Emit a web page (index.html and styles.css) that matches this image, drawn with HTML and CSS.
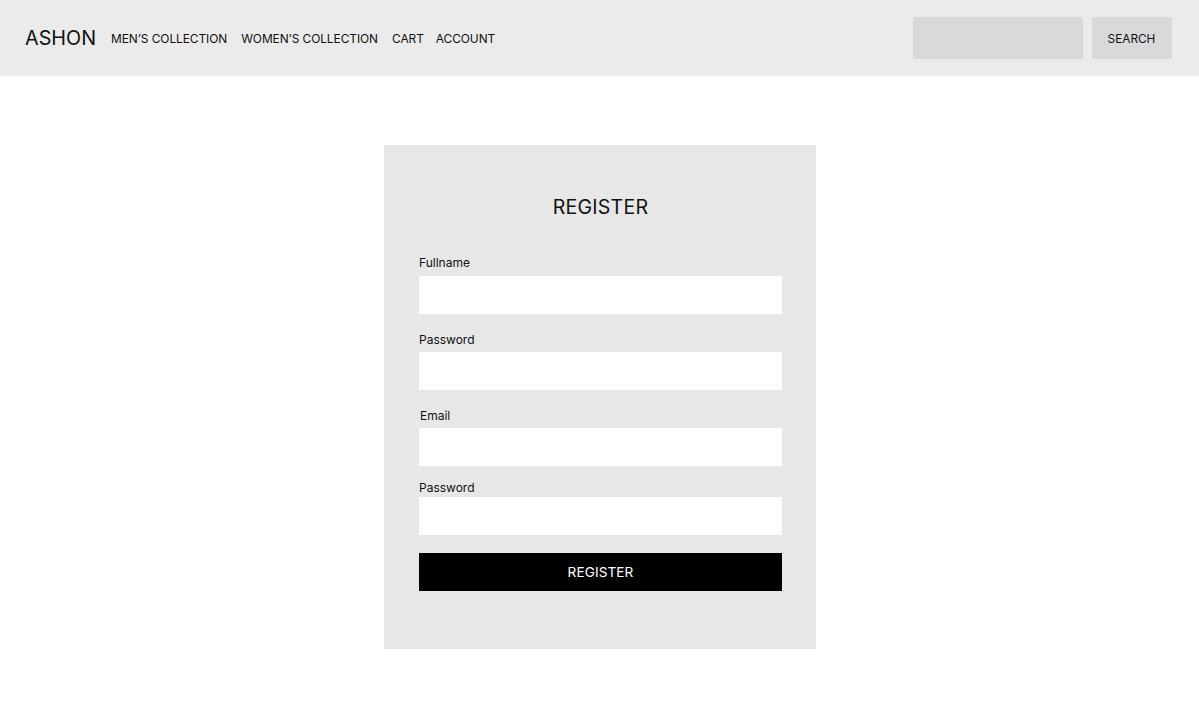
FILE: index.html
```html
<!DOCTYPE html>
<html lang="en">
<head>
<meta charset="utf-8">
<title>ASHON - Register</title>
<link rel="stylesheet" href="styles.css">
</head>
<body>
<header class="topbar">
  <div class="brand">ASHON</div>
  <nav class="nav">
    <a href="#" class="nav-link">MEN’S COLLECTION</a>
    <a href="#" class="nav-link">WOMEN’S COLLECTION</a>
    <a href="#" class="nav-link nav-link--tight">CART</a>
    <a href="#" class="nav-link">ACCOUNT</a>
  </nav>
  <form class="search">
    <input class="search-input" type="text" aria-label="Search">
    <button class="search-btn" type="button">SEARCH</button>
  </form>
</header>
<main class="main">
  <section class="card">
    <h1 class="card-title">REGISTER</h1>
    <div class="field">
      <label class="field-label">Fullname</label>
      <input class="field-input" type="text">
    </div>
    <div class="field">
      <label class="field-label">Password</label>
      <input class="field-input" type="password">
    </div>
    <div class="field">
      <label class="field-label field-label--indent">Email</label>
      <input class="field-input" type="email">
    </div>
    <div class="field field--compact">
      <label class="field-label">Password</label>
      <input class="field-input" type="password">
    </div>
    <button class="submit" type="button">REGISTER</button>
  </section>
</main>
</body>
</html>
```
FILE: styles.css
```css
* { box-sizing: border-box; }
html, body { margin: 0; padding: 0; }
body {
  font-family: Inter, "Liberation Sans", sans-serif;
  color: #111;
  background: #fff;
}
.topbar {
  height: 76px;
  background: #ebebeb;
  display: flex;
  align-items: center;
  padding: 0 27px 0 25px;
}
.brand {
  font-size: 19.8px;
  font-weight: 400;
  margin-right: 15px;
  line-height: 24px;
}
.nav {
  display: flex;
  align-items: center;
  gap: 14px;
  flex: 1;
  padding-top: 1px;
}
.nav-link {
  font-size: 11.9px;
  letter-spacing: -0.05px;
  color: #111;
  text-decoration: none;
  line-height: 15px;
}
.nav-link--tight { margin-right: -2px; }
.search {
  display: flex;
  gap: 9px;
  margin: 0;
}
.search-input {
  width: 170px;
  height: 42px;
  border: 0;
  background: #d9d9d9;
  outline: none;
  padding: 0 8px;
}
.search-btn {
  width: 80px;
  height: 42px;
  border: 0;
  background: #d9d9d9;
  font-family: inherit;
  font-size: 11.8px;
  color: #111;
  padding: 2px 1px 0 0;
}
.main {
  display: flex;
  justify-content: center;
  padding-top: 69px;
  padding-left: 1px;
}
.card {
  width: 432px;
  height: 504px;
  background: #e7e7e7;
  padding: 50px 34px 0 35px;
}
.card-title {
  margin: 0 0 36px;
  font-size: 19.6px;
  font-weight: 400;
  line-height: 24px;
  text-align: center;
  letter-spacing: 0.2px;
}
.field {
  display: flex;
  flex-direction: column;
  margin-bottom: 18px;
}
.field-label {
  font-size: 12px;
  line-height: 15px;
  margin-bottom: 6px;
}
.field-label--indent { padding-left: 1px; }
.field + .field .field-label { margin-bottom: 5px; }
.field + .field--compact { margin-top: -4px; }
.field--compact .field-label { margin-bottom: 2px !important; }
.field-input {
  height: 38px;
  border: 0;
  background: #fff;
  outline: none;
  padding: 0 10px;
  font-family: inherit;
}
.submit {
  width: 100%;
  height: 38px;
  border: 0;
  background: #000;
  color: #fff;
  font-family: inherit;
  font-size: 13.6px;
  letter-spacing: 0.1px;
}
```
